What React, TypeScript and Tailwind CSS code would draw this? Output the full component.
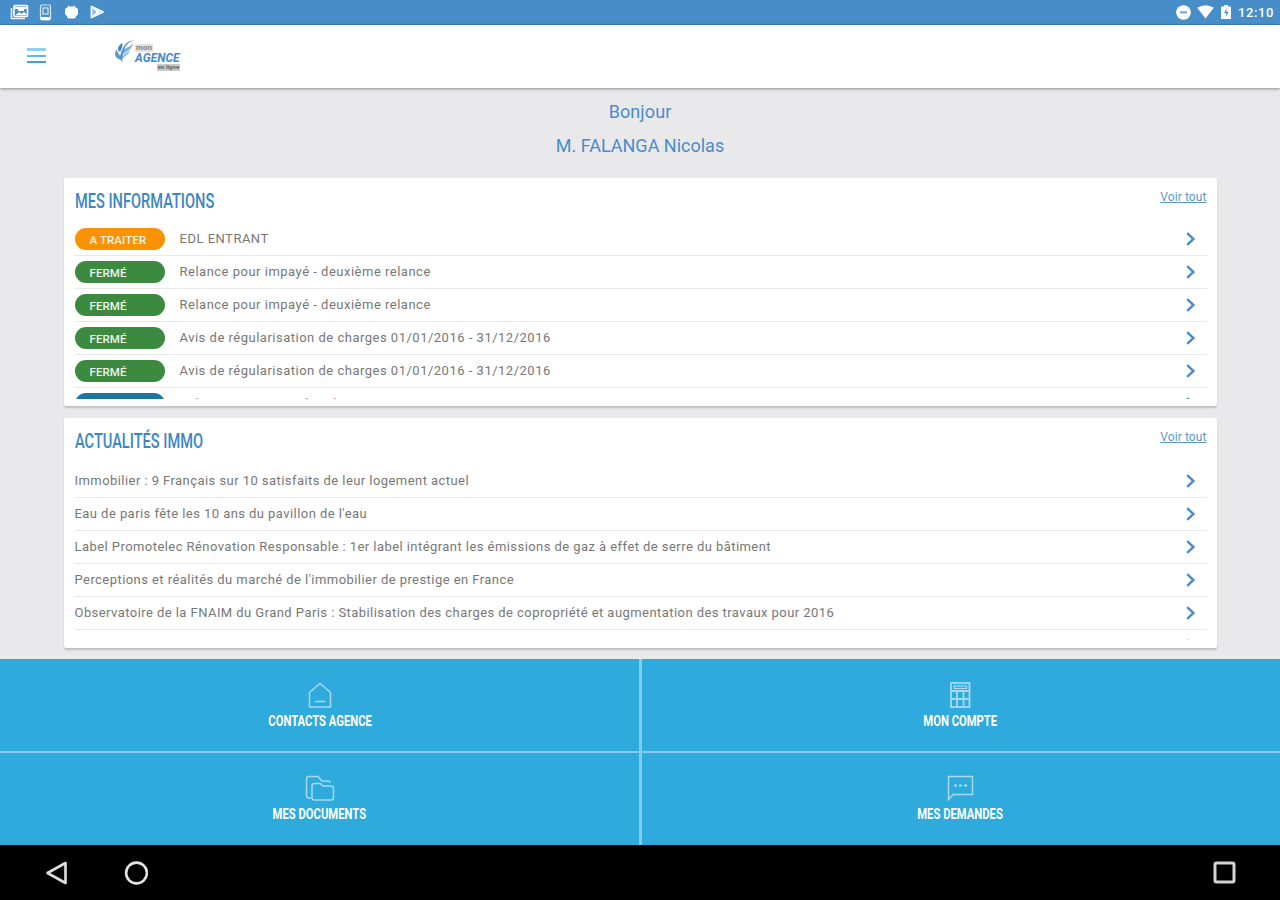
import type { ReactNode } from "react";

type Info = {
  status: string;
  color: string;
  label: string;
};

const infos: Info[] = [
  { status: "A TRAITER", color: "bg-[#fb9203]", label: "EDL ENTRANT" },
  { status: "FERMÉ", color: "bg-[#3c8a40]", label: "Relance pour impayé - deuxième relance" },
  { status: "FERMÉ", color: "bg-[#3c8a40]", label: "Relance pour impayé - deuxième relance" },
  { status: "FERMÉ", color: "bg-[#3c8a40]", label: "Avis de régularisation de charges 01/01/2016 - 31/12/2016" },
  { status: "FERMÉ", color: "bg-[#3c8a40]", label: "Avis de régularisation de charges 01/01/2016 - 31/12/2016" },
  { status: "", color: "bg-[#1a76a3]", label: "Relance pour impayé - relance" },
];

const news = [
  "Immobilier : 9 Français sur 10 satisfaits de leur logement actuel",
  "Eau de paris fête les 10 ans du pavillon de l'eau",
  "Label Promotelec Rénovation Responsable : 1er label intégrant les émissions de gaz à effet de serre du bâtiment",
  "Perceptions et réalités du marché de l'immobilier de prestige en France",
  "Observatoire de la FNAIM du Grand Paris : Stabilisation des charges de copropriété et augmentation des travaux pour 2016",
  "",
];

function Chevron() {
  return (
    <svg className="mr-[11px] h-[14px] w-[10px] shrink-0" viewBox="0 0 10 14" fill="none" stroke="#4a8cc8" strokeWidth="2.4">
      <path d="M1.2 1.2 L7.4 7 L1.2 12.8" />
    </svg>
  );
}

function StatusBar() {
  return (
    <div className="flex h-[25px] items-center justify-between border-b border-[#3e7fb9] bg-[#478ec9] pl-[10px] pr-[6px] text-white">
      <div className="flex items-center">
        <svg className="h-[16px] w-[19px]" viewBox="0 0 19 16" fill="none" stroke="#fff">
          <path d="M1.5 4 V14.5 H15" strokeWidth="1.6" opacity="0.85" />
          <rect x="4" y="1.5" width="13.5" height="11" rx="1" strokeWidth="1.6" />
          <path d="M5 3.8 H17 M8 6 H14" strokeWidth="2.2" />
          <path d="M6 11 L9 8.5 L12 10 L14 8 L16.5 11 Z" fill="#fff" strokeWidth="0.5" />
        </svg>
        <svg className="ml-[10px] h-[17px] w-[13px]" viewBox="0 0 13 17" fill="none" stroke="#fff">
          <rect x="1.5" y="1" width="10" height="15" rx="1.5" strokeWidth="1.2" opacity="0.8" />
          <rect x="4" y="4" width="5" height="6" strokeWidth="1.2" opacity="0.8" />
          <path d="M2 14.5 H11" strokeWidth="3" />
        </svg>
        <svg className="ml-[13px] h-[14px] w-[13px]" viewBox="0 0 13 14" fill="#fff">
          <rect x="0" y="2.5" width="13" height="8.5" rx="3" />
          <rect x="2" y="1.5" width="9" height="12" rx="2.5" />
          <path d="M3 0.3 L5 2 H8 L10 0.3 V3 H3 Z" />
        </svg>
        <svg className="ml-[12px] h-[14px] w-[15px]" viewBox="0 0 15 14" fill="none" stroke="#fff">
          <path d="M1.5 1.5 L13 7 L1.5 12.5 Z" fill="#ffffff66" strokeWidth="1.8" strokeLinejoin="round" />
          <path d="M2.5 2 L9 8.5 M2.5 12 L9 5.5" strokeWidth="1.4" />
        </svg>
      </div>
      <div className="flex items-center">
        <svg className="h-[15px] w-[15px]" viewBox="0 0 15 15">
          <circle cx="7.5" cy="7.5" r="7.3" fill="#fff" />
          <rect x="4" y="6.3" width="7" height="2" fill="#6da5d5" />
        </svg>
        <svg className="ml-[6px] h-[14px] w-[17px]" viewBox="0 0 17 14" fill="#fff">
          <path d="M0.2 2.8 Q8.5 -2.2 16.8 2.8 L8.5 13.5 Z" />
        </svg>
        <svg className="ml-[7px] h-[14px] w-[10px]" viewBox="0 0 10 14">
          <path d="M3 0 H7 V1.5 H10 V14 H0 V1.5 H3 Z" fill="#fff" />
          <path d="M5.6 3.5 L3 8 H5 V11.5 L7.4 6.8 H5.4 Z" fill="#478ec9" />
        </svg>
        <span className="ml-[7px] mt-px text-[13px] font-medium leading-none tracking-[0.6px]">12:10</span>
      </div>
    </div>
  );
}

function Header() {
  return (
    <header className="relative z-10 flex h-[63px] items-center bg-white pl-[27px] shadow-[0_1px_3px_rgba(0,0,0,0.4)]">
      <div className="-mt-[2px] flex w-[19px] flex-col gap-[4px]">
        <span className="h-[3px] bg-[#8fd0ee]" />
        <span className="h-[2px] bg-[#5fbbe5]" />
        <span className="h-[2px] bg-[#35a9dc]" />
      </div>
      <div className="ml-[68px] mt-px flex items-start">
        <svg className="-mt-[4px] h-[25px] w-[23px]" viewBox="0 0 23 25" fill="#3b86c8">
          <path d="M21 1 C16 1 14 3 12 6 C9 10 9 15 8 23 L7 20 C4 19 1 17 1 14 C1 12 2 11 3 9 C3 13 5 13 6 16 C7 12 8 9 10 6 C13 1 17 0 21 1 Z" opacity="0.85" />
          <path d="M4 10 C4 7 5 5 8 3 C9 6 8 8 6 12 Z" />
          <path d="M9 10 C12 7 16 8 19 3 C18 10 13 11 9 14 Z" opacity="0.65" />
          <path d="M8 17 C11 12 13 13 16 10 C15 15 11 16 8 19 Z" opacity="0.55" />
        </svg>
        <div className="-ml-[2px] flex w-[45px] flex-col">
          <span className="flex h-[8px] w-[18px] items-center justify-center bg-[#e2e2e0] text-[8px] font-bold leading-none text-[#85837e]">mon</span>
          <span className="h-[12px] whitespace-nowrap text-[12px] font-bold italic leading-[13px] text-[#4589c9]">AGENCE</span>
          <span className="flex h-[7px] w-[23px] items-center justify-center self-end whitespace-nowrap bg-[#c9c9c8] text-[6px] font-bold leading-none text-[#666]">en ligne</span>
        </div>
      </div>
    </header>
  );
}

type CardProps = {
  title: string;
  className: string;
  headClass: string;
  children: ReactNode;
};

function Card({ title, className, headClass, children }: CardProps) {
  return (
    <section className={`mx-auto w-[1153px] rounded-[2px] bg-white pl-[11px] pr-[10px] shadow-[0_2px_2px_rgba(0,0,0,0.18)] ${className}`}>
      <div className={`flex items-start justify-between ${headClass}`}>
        <h2 className="mt-[11px] origin-left scale-x-[0.73] whitespace-nowrap text-[20px] font-medium leading-6 text-[#3c86c6]">
          {title}
        </h2>
        <a className="mt-[11px] text-[12px] leading-4 tracking-[0.1px] text-[#5b98cd] underline">Voir tout</a>
      </div>
      {children}
    </section>
  );
}

function Tile({ label, className, children }: { label: string; className: string; children: ReactNode }) {
  return (
    <button type="button" className={`flex flex-col items-center bg-[#2eaadc] text-white ${className}`}>
      {children}
      <span className="mt-[2px] scale-x-[0.75] whitespace-nowrap text-[15px] font-bold leading-5">{label}</span>
    </button>
  );
}

export default function App() {
  return (
    <div className="flex h-[900px] w-[1280px] flex-col overflow-hidden bg-[#e9e9eb] font-['Roboto',sans-serif]">
      <StatusBar />
      <Header />

      <main className="h-[571px]">
        <div className="flex h-[90px] flex-col items-center pt-[12px] text-[18px] leading-6 text-[#4a8cc8]">
          <p className="tracking-[0.1px]">Bonjour</p>
          <p className="mt-[10px]">M. FALANGA Nicolas</p>
        </div>

        <Card title="MES INFORMATIONS" className="h-[228px]" headClass="h-[45px]">
          <ul className="h-[176px] overflow-hidden">
            {infos.map((info, i) => (
              <li key={i} className="flex h-[33px] items-center border-b border-[#e9e9e9]">
                <span className={`flex h-[22px] w-[90px] items-center rounded-full pl-[15px] pt-[3px] text-[11.5px] font-medium tracking-[0.1px] text-[#eef5ea] ${info.color}`}>
                  {info.status}
                </span>
                <span className="-mt-px ml-[15px] flex-1 text-[13px] tracking-[0.5px] text-[#777]">{info.label}</span>
                <Chevron />
              </li>
            ))}
          </ul>
        </Card>

        <Card title="ACTUALITÉS IMMO" className="mt-[12px] h-[230px]" headClass="h-[47px]">
          <ul className="h-[175px] overflow-hidden">
            {news.map((item, i) => (
              <li key={i} className="flex h-[33px] items-center border-b border-[#e9e9e9]">
                <span className="flex-1 text-[13px] tracking-[0.44px] text-[#777]">{item}</span>
                <Chevron />
              </li>
            ))}
          </ul>
        </Card>
      </main>

      <nav className="grid h-[186px] grid-cols-2 grid-rows-2 gap-x-[3px] gap-y-[2px] bg-[#84cbee]">
        <Tile label="CONTACTS AGENCE" className="pl-px pt-[22px]">
          <svg className="h-[28px] w-[28px]" viewBox="0 0 28 28" fill="none" stroke="#a5daf2" strokeWidth="1.5">
            <path d="M3.5 11.5 L14 2.5 L24.5 11.5 V26 H3.5 Z" />
            <path d="M9 20.5 H19.5" />
          </svg>
        </Tile>
        <Tile label="MON COMPTE" className="pr-[2px] pt-[22px]">
          <svg className="h-[28px] w-[28px]" viewBox="0 0 28 28" fill="none" stroke="#a5daf2" strokeWidth="1.8">
            <rect x="5" y="2" width="18.5" height="24" />
            <path d="M5 10 H23.5 M5 18 H23.5 M11 10 V26 M17.5 10 V26" />
            <rect x="8" y="5" width="12.5" height="2.5" strokeWidth="1.2" />
          </svg>
        </Tile>
        <Tile label="MES DOCUMENTS" className="pl-px pt-[21px]">
          <svg className="h-[28px] w-[30px]" viewBox="0 0 30 28" fill="none" stroke="#a5daf2" strokeWidth="1.5">
            <path d="M6 24 H4 Q1.5 24 1.5 21.5 V5 Q1.5 2.5 4 2.5 H13 L17 7 H23 Q25 7 25 9" />
            <path d="M7 23.5 V12 Q7 9.5 9.5 9.5 H15 L18 12 H26 Q28.5 12 28.5 14.5 V23.5 Q28.5 26 26 26 H9.5 Q7 26 7 23.5 Z" />
          </svg>
        </Tile>
        <Tile label="MES DEMANDES" className="pr-[2px] pt-[21px]">
          <svg className="h-[28px] w-[28px]" viewBox="0 0 28 28" fill="none" stroke="#a5daf2" strokeWidth="1.5">
            <path d="M2.5 25.5 V2.5 H26.5 V20.5 H7 Z" />
            <path d="M8 11.5 H11 M13 11.5 H16 M18 11.5 H21" strokeWidth="2" />
          </svg>
        </Tile>
      </nav>

      <footer className="flex h-[55px] items-center bg-black pl-[45px] pr-[44px]">
        <svg className="h-[24px] w-[23px]" viewBox="0 0 23 24" fill="none" stroke="#dedede" strokeWidth="2.6" strokeLinejoin="round">
          <path d="M20.5 2 V22 L2.5 12 Z" />
        </svg>
        <svg className="ml-[56px] h-[24px] w-[24px]" viewBox="0 0 24 24" fill="none" stroke="#e4e4e4" strokeWidth="2.6">
          <circle cx="12.5" cy="12" r="10.4" />
        </svg>
        <svg className="ml-auto h-[23px] w-[23px]" viewBox="0 0 23 23" fill="none" stroke="#d4d4d4" strokeWidth="3">
          <rect x="2" y="2" width="19" height="19" rx="1.5" />
        </svg>
      </footer>
    </div>
  );
}
